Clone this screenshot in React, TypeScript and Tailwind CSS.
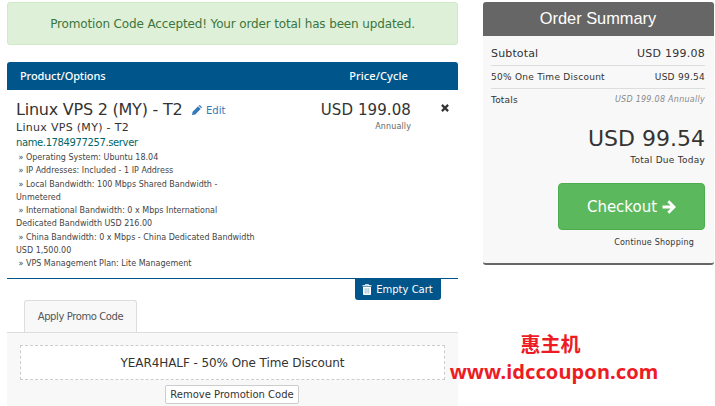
const options = [
  ["Operating System: Ubuntu 18.04"],
  ["IP Addresses: Included - 1 IP Address"],
  ["Local Bandwidth: 100 Mbps Shared Bandwidth -", "Unmetered"],
  ["International Bandwidth: 0 x Mbps International", "Dedicated Bandwidth USD 216.00"],
  ["China Bandwidth: 0 x Mbps - China Dedicated Bandwidth", "USD 1,500.00"],
  ["VPS Management Plan: Lite Management"],
];

function PencilIcon() {
  return (
    <svg viewBox="0 0 10 10" className="size-[10px]" fill="currentColor">
      <path d="M0 10 .6 6.8 6.1 1.3 8.7 3.9 3.2 9.4ZM6.7.8 7.2.3Q7.7-.1 8.1.3L9.7 1.9Q10.1 2.3 9.7 2.8L9.2 3.3Z" />
    </svg>
  );
}

function TimesIcon() {
  return (
    <svg viewBox="0 0 8 8" className="ml-[30px] mt-[4px] size-[8px]" stroke="currentColor" strokeWidth="2.2">
      <path d="M.9.9 7.1 7.1M7.1.9.9 7.1" />
    </svg>
  );
}

function TrashIcon() {
  return (
    <svg viewBox="0 0 10 11" className="h-[11px] w-[10px]" fill="none" stroke="currentColor">
      <path d="M.5 1.8H9.5" strokeWidth="1.2" />
      <path d="M3.4 1.8V.6H6.6V1.8" strokeWidth=".9" />
      <path d="M1 3H9V10Q9 11 8 11H2Q1 11 1 10Z" fill="currentColor" stroke="none" />
      <path d="M3.2 4.2V9.6M5 4.2V9.6M6.8 4.2V9.6" stroke="#00558a" strokeWidth=".4" />
    </svg>
  );
}

function ArrowIcon() {
  return (
    <svg viewBox="0 0 14 14" className="size-[14px]" fill="none" stroke="currentColor" strokeWidth="2.8">
      <path d="M.5 7H12M6.3 1.2 12.1 7 6.3 12.8" />
    </svg>
  );
}

function CartItem() {
  return (
    <div className="flex h-[189px] border-b border-[#00558a] pl-[9px] pt-[10px]">
      <div className="w-[260px] shrink-0">
        <div className="flex h-[20px] items-center whitespace-nowrap">
          <span className="w-[167px] text-[16px] leading-[20px] tracking-[-0.23px]">Linux VPS 2 (MY) - T2</span>
          <a href="#" className="ml-[9px] flex items-center gap-[4px] text-[10px] text-[#337ab7]">
            <PencilIcon />
            Edit
          </a>
        </div>
        <div className="h-[15px] text-[11px] leading-[16px] tracking-[0.3px]">Linux VPS (MY) - T2</div>
        <div className="h-[16px] text-[10px] leading-[16px] tracking-[-0.38px] text-[#006666]">name.1784977257.server</div>
        <div className="text-[8px] leading-[13.3px] text-[#444]">
          {options.map(([first, rest]) => (
            <div key={first} className="whitespace-nowrap">
              <p className="pl-[2.5px]">» {first}</p>
              {rest && <p>{rest}</p>}
            </div>
          ))}
        </div>
      </div>
      <div className="w-[135px] text-right">
        <p className="text-[15px] leading-[20px] tracking-[0.1px]">USD 199.08</p>
        <p className="text-[8px] leading-[13px] tracking-[0.12px] text-[#666]">Annually</p>
      </div>
      <TimesIcon />
    </div>
  );
}

function PromoCode() {
  return (
    <div>
      <div className="flex h-[32px] pl-[17px]">
        <div className="w-[113px] rounded-t-[3px] border border-b-0 border-[#ddd] bg-[#f8f8f8] text-center text-[10px] leading-[32px] tracking-[-0.4px] text-[#555]">
          Apply Promo Code
        </div>
      </div>
      <div className="flex h-[74px] flex-col items-center border-t border-[#ddd] bg-[#f8f8f8] pt-[12px]">
        <div className="h-[35px] w-[425px] border border-dashed border-[#ccc] bg-white text-center text-[12px] leading-[34px] tracking-[-0.08px]">
          YEAR4HALF - 50% One Time Discount
        </div>
        <button className="mr-[1px] mt-[5px] h-[19px] w-[134px] whitespace-nowrap rounded-[2px] border border-[#ccc] bg-white text-[10px] leading-[17px]">
          Remove Promotion Code
        </button>
      </div>
    </div>
  );
}

function OrderSummary() {
  return (
    <aside className="h-[263px] w-[231px] shrink-0 overflow-hidden rounded-[3px] border-b-2 border-[#666] bg-[#f8f8f8]">
      <h2 className="h-[34px] bg-[#666] pr-[1px] text-center font-['Liberation_Sans'] text-[16.4px] leading-[33px] text-white">
        Order Summary
      </h2>
      <div className="pl-[8px] pr-[9px]">
        <div className="flex h-[30px] justify-between border-b border-[#ddd] text-[11px] leading-[35px]">
          <span className="tracking-[0.15px]">Subtotal</span>
          <span className="tracking-[0.25px]">USD 199.08</span>
        </div>
        <div className="flex h-[23px] justify-between border-b border-[#ddd] text-[9px] leading-[22px] tracking-[0.26px]">
          <span>50% One Time Discount</span>
          <span>USD 99.54</span>
        </div>
        <div className="flex h-[30px] justify-between text-[9px] leading-[22px]">
          <span className="tracking-[0.2px]">Totals</span>
          <span className="text-[8px] tracking-[0.27px] italic text-[#888]">USD 199.08 Annually</span>
        </div>
        <p className="mt-[5px] text-right text-[22px] leading-[30px]">USD 99.54</p>
        <p className="text-right text-[9px] leading-[12px] tracking-[0.25px]">Total Due Today</p>
        <div className="mt-[17px] flex justify-end">
          <button className="flex h-[47px] w-[147px] items-center justify-center gap-[5px] rounded-[4px] border border-[#4cae4c] bg-[#5cb85c] text-[15px] text-white">
            <span className="pt-[1px]">Checkout</span>
            <ArrowIcon />
          </button>
        </div>
        <p className="mt-[5px] pr-[11px] text-right text-[8px] leading-[15px] tracking-[0.22px]">Continue Shopping</p>
      </div>
    </aside>
  );
}

export default function App() {
  return (
    <div className="relative h-[406px] w-[715px] overflow-hidden bg-white font-['DejaVu_Sans',sans-serif] text-[#333]">
      <div className="flex gap-[25px] pl-[7px] pt-[2px]">
        <main className="w-[451px] shrink-0">
          <div className="h-[43px] rounded-[3px] border border-[#d0e9c6] bg-[#dff0d8] text-center text-[12px] leading-[42px] tracking-[-0.14px] text-[#3c763d]">
            Promotion Code Accepted! Your order total has been updated.
          </div>
          <div className="mt-[17px] flex h-[28px] items-center justify-between rounded-t-[3px] bg-[#00558a] pl-[13px] pr-[50px] pt-[1px] font-['Noto_Sans'] text-[11px] font-medium text-white">
            <span className="tracking-[-0.1px]">Product/Options</span>
            <span className="tracking-[0.1px]">Price/Cycle</span>
          </div>
          <CartItem />
          <div className="flex h-[21px] justify-end pr-[17px]">
            <button className="flex w-[86px] items-center justify-center gap-[4px] whitespace-nowrap rounded-b-[3px] bg-[#00558a] pr-[1px] text-[10px] text-white">
              <TrashIcon />
              Empty Cart
            </button>
          </div>
          <PromoCode />
        </main>
        <OrderSummary />
      </div>
      <div className="absolute left-[449px] top-[332px] w-[210px] whitespace-nowrap text-center font-bold text-[#ed1c24]">
        <p className="pr-[7px] font-['Noto_Sans_CJK_SC',sans-serif] text-[20px] leading-[24px]">惠主机</p>
        <p className="font-['Noto_Sans',sans-serif] text-[20px] leading-[31px] tracking-[0.1px]">www.idccoupon.com</p>
      </div>
    </div>
  );
}
